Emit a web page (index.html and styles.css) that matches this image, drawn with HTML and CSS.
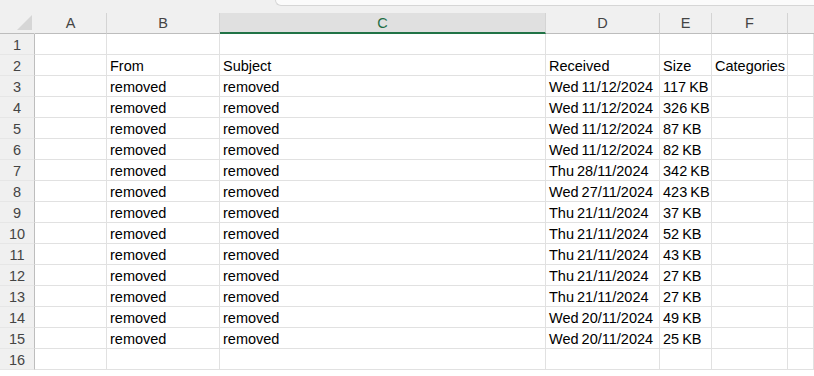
FILE: index.html
```html
<!DOCTYPE html>
<html lang="en">
<head>
    <meta charset="UTF-8">
    <meta name="viewport" content="width=device-width, initial-scale=1.0">
    <title>Inbox export</title>
    <link rel="stylesheet" href="styles.css">
</head>
<body>

<div class="top-strip">
    <div class="pane-tab"></div>
</div>

<div class="sheet" id="sheet">
    <!-- column headers -->
    <div class="corner">
        <svg width="15" height="15" viewBox="0 0 15 15"><polygon points="15,0 15,15 0,15" fill="#d6d6d6"/></svg>
    </div>
    <div class="col-head">A</div>
    <div class="col-head">B</div>
    <div class="col-head selected">C</div>
    <div class="col-head">D</div>
    <div class="col-head">E</div>
    <div class="col-head">F</div>
    <div class="col-head last"></div>
    <!-- rows are filled in by the script below -->
</div>

<script>
    const mails = [
        ['Wed 11/12/2024', '117 KB'],
        ['Wed 11/12/2024', '326 KB'],
        ['Wed 11/12/2024', '87 KB'],
        ['Wed 11/12/2024', '82 KB'],
        ['Thu 28/11/2024', '342 KB'],
        ['Wed 27/11/2024', '423 KB'],
        ['Thu 21/11/2024', '37 KB'],
        ['Thu 21/11/2024', '52 KB'],
        ['Thu 21/11/2024', '43 KB'],
        ['Thu 21/11/2024', '27 KB'],
        ['Thu 21/11/2024', '27 KB'],
        ['Wed 20/11/2024', '49 KB'],
        ['Wed 20/11/2024', '25 KB']
    ];

    const rows = [
        ['', '', '', '', '', '', ''],
        ['', 'From', 'Subject', 'Received', 'Size', 'Categories', '']
    ];
    mails.forEach(m => rows.push(['', 'removed', 'removed', m[0], m[1], '', '']));
    rows.push(['', '', '', '', '', '', '']);

    const sheet = document.getElementById('sheet');
    rows.forEach((row, i) => {
        const head = document.createElement('div');
        head.className = 'row-head';
        head.textContent = i + 1;
        sheet.appendChild(head);

        row.forEach(value => {
            const cell = document.createElement('div');
            cell.className = 'cell';
            cell.textContent = value;
            sheet.appendChild(cell);
        });
    });
</script>

</body>
</html>
```

FILE: styles.css
```css
body {
    margin: 0;
    background: #ffffff;
    font-family: 'Liberation Sans', Arial, sans-serif;
    overflow: hidden;
}

/* strip above the column letters */
.top-strip {
    display: flex;
    height: 13px;
    background-color: #f0f0f0;
}

.pane-tab {
    flex: 1;
    margin-left: 275px;
    height: 5px;
    background-color: #fbfbfb;
    border-left: 1px solid #d6d6d6;
    border-bottom: 1px solid #d6d6d6;
    border-bottom-left-radius: 6px;
}

.sheet {
    display: grid;
    grid-template-columns: 35px 72px 113px 326px 114px 52px 76px 1fr;
    grid-auto-rows: 21px;
}

.corner {
    display: flex;
    justify-content: flex-end;
    align-items: flex-end;
    padding: 0 2px 3px 0;
    background-color: #f0f0f0;
    border-bottom: 1px solid #bdbdbd;
    border-right: 1px solid #f0f0f0;
    box-sizing: border-box;
}

.col-head {
    display: flex;
    justify-content: center;
    align-items: center;
    background-color: #f0f0f0;
    border-right: 1px solid #d4d4d4;
    border-bottom: 1px solid #bdbdbd;
    box-sizing: border-box;
    font-size: 14.5px;
    color: #444444;
}

.col-head.selected {
    background-color: #e0e0e0;
    border-bottom: 2px solid #217346;
    color: #1e6e44;
}

.col-head.last {
    border-right: none;
}

.row-head {
    display: flex;
    justify-content: center;
    align-items: center;
    padding-top: 1px;
    background-color: #f0f0f0;
    border-right: 1px solid #bdbdbd;
    border-bottom: 1px solid #e6e6e6;
    box-sizing: border-box;
    font-size: 14.5px;
    color: #444444;
}

.cell {
    padding: 2px 0 0 3px;
    border-right: 1px solid #e1e1e1;
    border-bottom: 1px solid #e1e1e1;
    box-sizing: border-box;
    font-size: 14.5px;
    line-height: 18px;
    word-spacing: -1px;
    color: #000000;
    white-space: nowrap;
    overflow: hidden;
}
```
